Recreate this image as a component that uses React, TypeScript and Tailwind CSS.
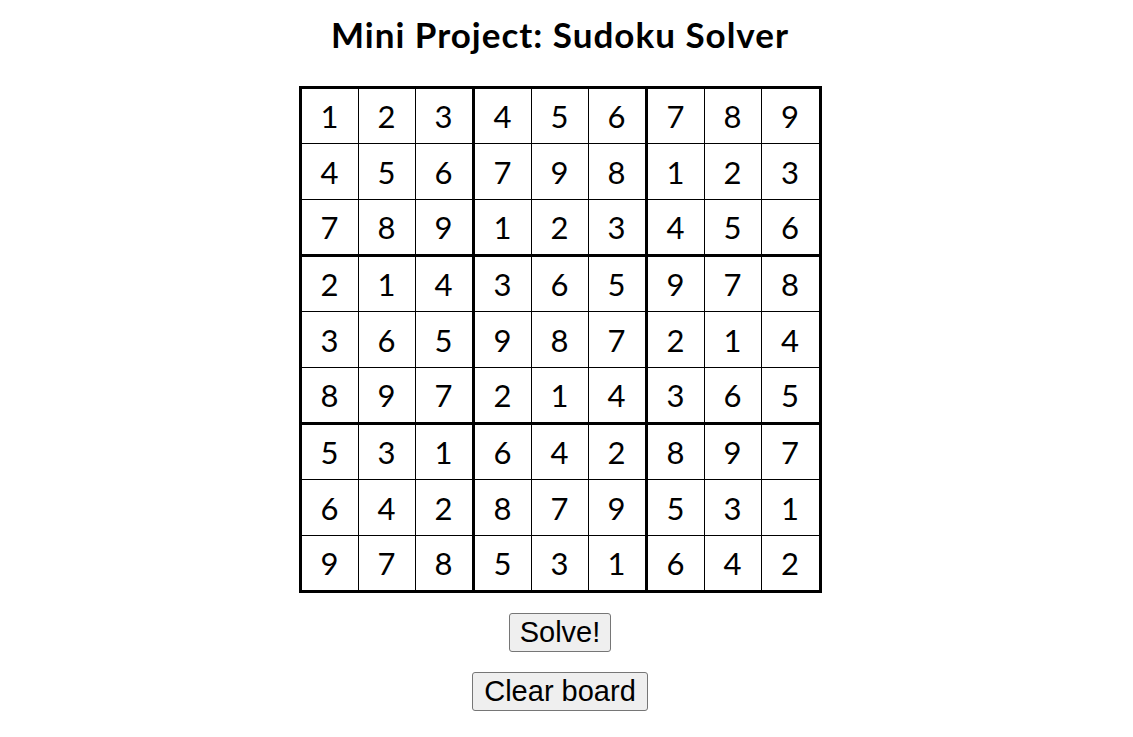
import { useState } from 'react'

const START: number[][] = [
  [1, 2, 3, 4, 5, 6, 7, 8, 9],
  [4, 5, 6, 7, 9, 8, 1, 2, 3],
  [7, 8, 9, 1, 2, 3, 4, 5, 6],
  [2, 1, 4, 3, 6, 5, 9, 7, 8],
  [3, 6, 5, 9, 8, 7, 2, 1, 4],
  [8, 9, 7, 2, 1, 4, 3, 6, 5],
  [5, 3, 1, 6, 4, 2, 8, 9, 7],
  [6, 4, 2, 8, 7, 9, 5, 3, 1],
  [9, 7, 8, 5, 3, 1, 6, 4, 2],
]

// box widths/heights include the cell's own right/bottom border
const colW = ['w-[57px]', 'w-[57px]', 'w-[59px]', 'w-[57px]', 'w-[57px]', 'w-[59px]', 'w-[57px]', 'w-[57px]', 'w-[57px]']
const rowH = ['h-[55px]', 'h-[56px]', 'h-[57px]', 'h-[55px]', 'h-[56px]', 'h-[57px]', 'h-[55px]', 'h-[56px]', 'h-[54px]']

function borderR(c: number) {
  if (c === 8) return ''
  if (c === 2 || c === 5) return 'border-r-[3px]'
  return 'border-r'
}

function borderB(r: number) {
  if (r === 8) return ''
  if (r === 2 || r === 5) return 'border-b-[3px]'
  return 'border-b'
}

export default function App() {
  const [board, setBoard] = useState<(number | null)[][]>(START)

  const clearBoard = () => setBoard(START.map((row) => row.map(() => null)))
  const solve = () => setBoard(START)

  return (
    <div className="w-[1120px] min-h-screen bg-white flex flex-col items-center pt-[14px] font-['Lato','Open_Sans',sans-serif]">
      <h1 className="text-[35px] leading-[40px] tracking-[1px] font-bold text-black">
        Mini Project: Sudoku Solver
      </h1>

      <div className="mt-[32px] border-[3px] border-black flex flex-col">
        {board.map((row, r) => (
          <div key={r} className="flex">
            {row.map((v, c) => (
              <div
                key={c}
                className={`${colW[c]} ${rowH[r]} ${borderR(c)} ${borderB(r)} border-black flex items-center justify-center pt-[1px] text-[31px] text-black`}
              >
                {v ?? ''}
              </div>
            ))}
          </div>
        ))}
      </div>

      <button
        onClick={solve}
        className="mt-[20px] w-[102px] h-[39px] bg-[#efefef] border border-[#767676] rounded-[3px] text-[29px] leading-none text-black flex items-center justify-center font-['Liberation_Sans',Arial,sans-serif]"
      >
        Solve!
      </button>

      <button
        onClick={clearBoard}
        className="mt-[20px] w-[176px] h-[39px] bg-[#efefef] border border-[#767676] rounded-[3px] text-[29px] leading-none text-black flex items-center justify-center font-['Liberation_Sans',Arial,sans-serif]"
      >
        Clear board
      </button>
    </div>
  )
}
